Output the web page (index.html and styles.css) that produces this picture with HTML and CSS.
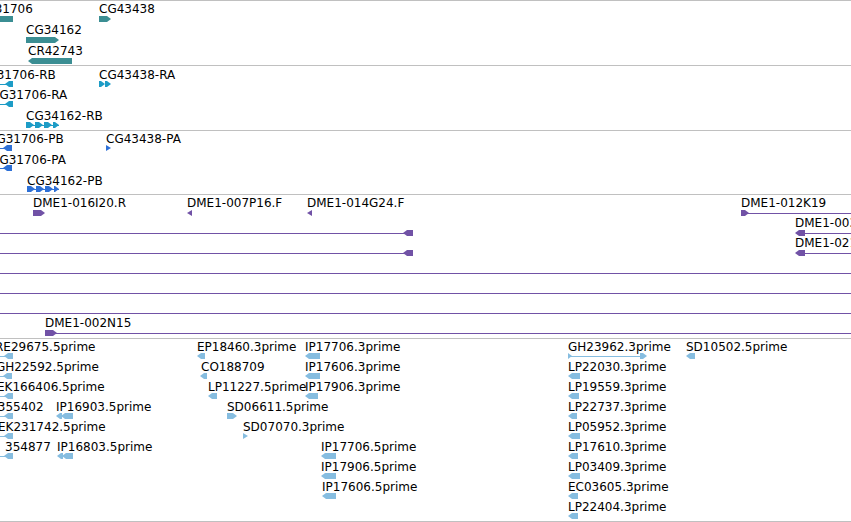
FILE: index.html
```html
<!doctype html>
<html lang="en">
<head>
    <meta charset="UTF-8">
    <title>Tracks</title>
    <link rel="stylesheet" href="styles.css">
</head>
<body>
<div id="panel" class="panel"></div>
<script>
    //每个轨道: 顶部位置, 高度, 颜色, 行(基线, 图形顶部), 特征
    var tracks = [
        {top: 1, height: 64, color: '#3b8e93', rows: [[13, 16], [34, 37], [55, 58]],
         feats: [
            ['CG31706', -23, 0, [['box', -30, 13]]],
            ['CG43438', 99, 0, [['right', 99, 111]]],
            ['CG34162', 26, 1, [['right', 26, 59]]],
            ['CR42743', 28, 2, [['left', 28, 72]]]
         ]},
        {top: 66, height: 64, color: '#1d9cc6', rows: [[79, 81], [99, 101], [120, 122]],
         feats: [
            ['CG31706-RB', -21, 0, [['line', -30, 8], ['left', 5, 13]]],
            ['CG31706-RA', -9, 1, [['line', -30, 8], ['left', 5, 13]]],
            ['CG43438-RA', 99, 0, [['right', 99, 105], ['right', 105, 111]]],
            ['CG34162-RB', 26, 2, [['line', 26, 59], ['right', 26, 34], ['right', 35, 43], ['right', 44, 52], ['right', 53, 59]]]
         ]},
        {top: 131, height: 63, color: '#2e70d6', rows: [[143, 145], [164, 165], [185, 186]],
         feats: [
            ['CG31706-PB', -12, 0, [['line', -30, 6], ['left', 3, 12]]],
            ['CG31706-PA', -9, 1, [['line', -30, 6], ['left', 3, 12]]],
            ['CG43438-PA', 106, 0, [['rtri', 106, 111]]],
            ['CG34162-PB', 27, 2, [['line', 27, 59], ['right', 27, 35], ['right', 36, 44], ['right', 45, 53], ['right', 54, 59]]]
         ]},
        {top: 195, height: 143, color: '#7152a6', rows: [],
         feats: [
            ['DME1-016I20.R', 33, 0, [['right', 33, 45]]],
            ['DME1-007P16.F', 187, 0, [['ltri', 187, 192]]],
            ['DME1-014G24.F', 307, 0, [['ltri', 307, 312]]],
            ['DME1-012K19', 741, 0, [['line', 745, 860], ['right', 741, 749]]],
            ['', 0, 1, [['line', -10, 408], ['left', 403, 413]]],
            ['DME1-003C07.R', 795, 1, [['line', 800, 860], ['left', 795, 805]]],
            ['', 0, 2, [['line', -10, 408], ['left', 403, 413]]],
            ['DME1-021K12.R', 795, 2, [['line', 800, 860], ['left', 795, 805]]],
            ['', 0, 3, [['line', -10, 860]]],
            ['', 0, 4, [['line', -10, 860]]],
            ['', 0, 5, [['line', -10, 860]]],
            ['DME1-002N15', 45, 6, [['line', 50, 860], ['right', 45, 57]]]
         ]},
        {top: 339, height: 182, color: '#86bde0', rows: [],
         feats: [
            ['RE29675.5prime', -5, 0, [['line', -30, 6], ['left', 4, 13]]],
            ['GH22592.5prime', -4, 1, [['line', -30, 6], ['left', 3, 12]]],
            ['EK166406.5prime', -3, 2, [['line', -30, 6], ['left', 4, 13]]],
            ['CO355402', -20, 3, [['line', -30, 6], ['left', 4, 13]]],
            ['IP16903.5prime', 56, 3, [['left', 56, 62], ['left', 61, 73]]],
            ['EK231742.5prime', -2, 4, [['line', -30, 6], ['left', 4, 13]]],
            ['354877', 5, 5, [['line', -30, 6], ['left', 4, 13]]],
            ['IP16803.5prime', 57, 5, [['left', 57, 63], ['left', 62, 73]]],
            ['EP18460.3prime', 197, 0, [['left', 197, 205]]],
            ['CO188709', 201, 1, [['left', 200, 207]]],
            ['LP11227.5prime', 208, 2, [['left', 208, 217]]],
            ['SD06611.5prime', 227, 3, [['right', 227, 237]]],
            ['SD07070.3prime', 243, 4, [['rtri', 243, 248]]],
            ['IP17706.3prime', 305, 0, [['left', 305, 320]]],
            ['IP17606.3prime', 305, 1, [['left', 305, 320]]],
            ['IP17906.3prime', 305, 2, [['left', 305, 318]]],
            ['IP17706.5prime', 321, 5, [['left', 321, 336]]],
            ['IP17906.5prime', 321, 6, [['left', 321, 336]]],
            ['IP17606.5prime', 322, 7, [['left', 322, 336]]],
            ['GH23962.3prime', 568, 0, [['line', 570, 644], ['rtri', 568, 572], ['right', 640, 647]]],
            ['SD10502.5prime', 686, 0, [['left', 686, 695]]],
            ['LP22030.3prime', 568, 1, [['left', 568, 580]]],
            ['LP19559.3prime', 568, 2, [['left', 568, 579]]],
            ['LP22737.3prime', 568, 3, [['left', 568, 577]]],
            ['LP05952.3prime', 568, 4, [['left', 568, 580]]],
            ['LP17610.3prime', 568, 5, [['left', 568, 578]]],
            ['LP03409.3prime', 568, 6, [['left', 568, 580]]],
            ['EC03605.3prime', 568, 7, [['left', 568, 578]]],
            ['LP22404.3prime', 568, 8, [['left', 568, 578]]]
         ]}
    ];
    //等距行
    for (var k = 0; k < 7; k++) tracks[3].rows.push([207 + 20 * k, 210 + 20 * k]);
    for (var k = 0; k < 9; k++) tracks[4].rows.push([351 + 20 * k, 353 + 20 * k]);

    function pts(a) {
        return '<polygon points="' + a.join(' ') + '"/>';
    }
    //画图形
    function glyph(p, gy) {
        var x1 = p[1], x2 = p[2], h = 6, mid = gy + 3;
        var head = Math.min(4, x2 - x1);
        switch (p[0]) {
            case 'box':
                return '<rect x="' + x1 + '" y="' + gy + '" width="' + (x2 - x1) + '" height="' + h + '"/>';
            case 'line':
                return '<rect x="' + x1 + '" y="' + mid + '" width="' + (x2 - x1) + '" height="1"/>';
            case 'right':
                return pts([x1 + ',' + gy, (x2 - head) + ',' + gy, x2 + ',' + mid, (x2 - head) + ',' + (gy + h), x1 + ',' + (gy + h)]);
            case 'left':
                return pts([x1 + ',' + mid, (x1 + head) + ',' + gy, x2 + ',' + gy, x2 + ',' + (gy + h), (x1 + head) + ',' + (gy + h)]);
            case 'rtri':
                return pts([x1 + ',' + gy, x2 + ',' + mid, x1 + ',' + (gy + h)]);
            case 'ltri':
                return pts([x2 + ',' + gy, x1 + ',' + mid, x2 + ',' + (gy + h)]);
        }
        return '';
    }

    var html = '';
    for (var i = 0; i < tracks.length; i++) {
        var t = tracks[i];
        var svg = '<svg width="851" height="' + t.height + '" viewBox="0 ' + t.top + ' 851 ' + t.height + '">';
        var shapes = '', labels = '';
        for (var j = 0; j < t.feats.length; j++) {
            var f = t.feats[j], row = t.rows[f[2]];
            for (var n = 0; n < f[3].length; n++) shapes += glyph(f[3][n], row[1]);
            if (f[0]) labels += '<text class="label" x="' + f[1] + '" y="' + row[0] + '">' + f[0] + '</text>';
        }
        svg += '<g fill="' + t.color + '">' + shapes + '</g>' + labels + '</svg>';
        html += '<div class="track">' + svg + '</div>';
    }
    document.getElementById('panel').innerHTML = html;
</script>
</body>
</html>
```

FILE: styles.css
```css
body {
    margin: 0;
    background: #fff;
    font-family: "DejaVu Sans", sans-serif;
}
.panel {
    width: 851px;
    border-top: 1px solid #c0c0c0;
}
.track {
    border-bottom: 1px solid #c0c0c0;
}
.track svg {
    display: block;
}
.label {
    font: 12px "DejaVu Sans", sans-serif;
    fill: #000;
}
```
